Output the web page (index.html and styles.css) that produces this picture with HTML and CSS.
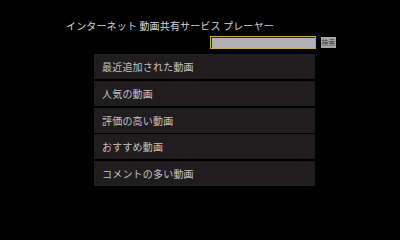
FILE: index.html
```html
<!DOCTYPE html>
<html lang="ja">
<head>
<meta charset="utf-8">
<link rel="stylesheet" href="styles.css">
</head>
<body>
<div class="page">
  <h1 class="title">インターネット 動画共有サービス プレーヤー</h1>
  <div class="search">
    <div class="search-box"><div class="search-field"></div></div>
    <div class="search-btn">検索</div>
  </div>
  <ul class="menu">
    <li class="item">最近追加された動画</li>
    <li class="item">人気の動画</li>
    <li class="item">評価の高い動画</li>
    <li class="item">おすすめ動画</li>
    <li class="item">コメントの多い動画</li>
  </ul>
</div>
</body>
</html>
```
FILE: styles.css
```css
html, body {
  margin: 0;
  padding: 0;
  background: #000;
  width: 400px;
  height: 225px;
  overflow: hidden;
  font-family: "Noto Sans CJK JP", "Noto Sans", sans-serif;
}
.page {
  display: flex;
  flex-direction: column;
  padding-top: 19px;
}
.title {
  margin: 0 0 0 66px;
  font-size: 10px;
  font-weight: normal;
  line-height: 14px;
  color: #d6d6d6;
  letter-spacing: 0.15px;
}
.search {
  display: flex;
  align-items: center;
  justify-content: flex-end;
  gap: 5px;
  margin-top: 3px;
  padding-right: 64px;
}
.search-box {
  width: 106px;
  height: 13px;
  box-sizing: border-box;
  border: 1.5px solid #d2b000;
  background: #2a2800;
  padding: 0.5px;
}
.search-field {
  height: 100%;
  background: #b3b0b5;
}
.search-btn {
  width: 15px;
  height: 11px;
  background: #a9a7aa;
  color: #3e3e3e;
  font-size: 7px;
  line-height: 11px;
  text-align: center;
}
.menu {
  list-style: none;
  margin: 5px 0 0 94px;
  padding: 0;
  width: 221px;
  display: flex;
  flex-direction: column;
  gap: 1.75px;
}
.item {
  height: 25px;
  background: #1f1d1e;
  color: #c4c2c3;
  font-size: 10px;
  line-height: 25px;
  padding-left: 8px;
  letter-spacing: 0.2px;
}
```
